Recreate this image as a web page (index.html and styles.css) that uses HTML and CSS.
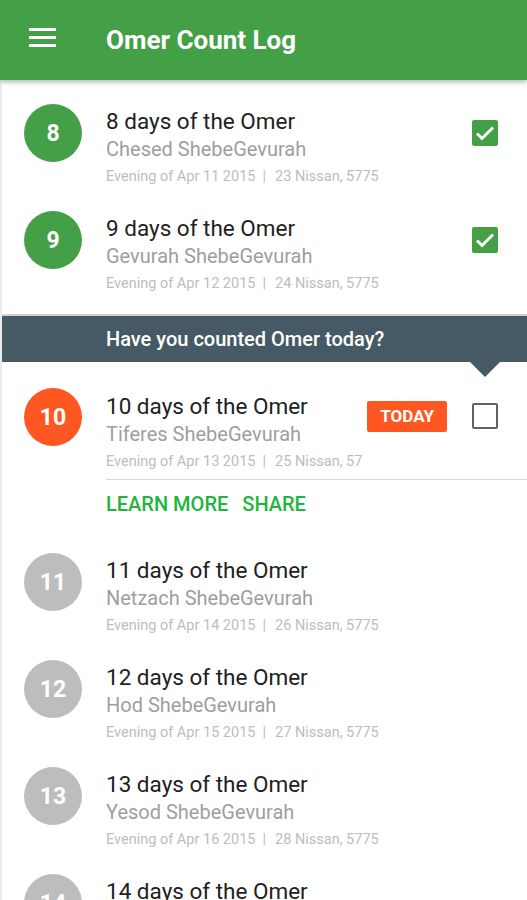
FILE: index.html
```html
<!DOCTYPE html>
<html lang="en">
<head>
    <meta charset="UTF-8">
    <meta name="viewport" content="width=device-width, initial-scale=1.0">
    <title>Omer Count Log</title>
    <link rel="stylesheet" href="styles.css">
</head>
<body>
    <header class="toolbar">
        <svg class="menu" width="27" height="19" viewBox="0 0 27 19">
            <rect x="0" y="0" width="27" height="3" fill="#fff"/>
            <rect x="0" y="8" width="27" height="3" fill="#fff"/>
            <rect x="0" y="16" width="27" height="3" fill="#fff"/>
        </svg>
        <h1>Omer Count Log</h1>
    </header>

    <main class="log">
        <div class="day done">
            <div class="num">8</div>
            <div class="info">
                <div class="title">8 days of the Omer</div>
                <div class="sub">Chesed ShebeGevurah</div>
                <div class="meta">Evening of Apr 11 2015<span class="sep">|</span>23 Nissan, 5775</div>
            </div>
            <div class="check on">
                <svg width="26" height="26" viewBox="0 0 26 26"><path d="M5 13.5l5 5L21 7.5" fill="none" stroke="#fff" stroke-width="3"/></svg>
            </div>
        </div>

        <div class="day done">
            <div class="num">9</div>
            <div class="info">
                <div class="title">9 days of the Omer</div>
                <div class="sub">Gevurah ShebeGevurah</div>
                <div class="meta">Evening of Apr 12 2015<span class="sep">|</span>24 Nissan, 5775</div>
            </div>
            <div class="check on">
                <svg width="26" height="26" viewBox="0 0 26 26"><path d="M5 13.5l5 5L21 7.5" fill="none" stroke="#fff" stroke-width="3"/></svg>
            </div>
        </div>

        <div class="prompt">Have you counted Omer today?</div>

        <div class="day today">
            <div class="num">10</div>
            <div class="info">
                <div class="head">
                    <div class="text">
                        <div class="title">10 days of the Omer</div>
                        <div class="sub">Tiferes ShebeGevurah</div>
                        <div class="meta">Evening of Apr 13 2015<span class="sep">|</span>25 Nissan, 57</div>
                    </div>
                    <span class="tag">TODAY</span>
                    <div class="check"></div>
                </div>
                <div class="actions">
                    <a href="#">Learn more</a>
                    <a href="#">Share</a>
                </div>
            </div>
        </div>

        <div class="day later">
            <div class="num">11</div>
            <div class="info">
                <div class="title">11 days of the Omer</div>
                <div class="sub">Netzach ShebeGevurah</div>
                <div class="meta">Evening of Apr 14 2015<span class="sep">|</span>26 Nissan, 5775</div>
            </div>
        </div>

        <div class="day later">
            <div class="num">12</div>
            <div class="info">
                <div class="title">12 days of the Omer</div>
                <div class="sub">Hod ShebeGevurah</div>
                <div class="meta">Evening of Apr 15 2015<span class="sep">|</span>27 Nissan, 5775</div>
            </div>
        </div>

        <div class="day later">
            <div class="num">13</div>
            <div class="info">
                <div class="title">13 days of the Omer</div>
                <div class="sub">Yesod ShebeGevurah</div>
                <div class="meta">Evening of Apr 16 2015<span class="sep">|</span>28 Nissan, 5775</div>
            </div>
        </div>

        <div class="day later">
            <div class="num">14</div>
            <div class="info">
                <div class="title">14 days of the Omer</div>
                <div class="sub">Malchus ShebeGevurah</div>
                <div class="meta">Evening of Apr 17 2015<span class="sep">|</span>29 Nissan, 5775</div>
            </div>
        </div>
    </main>
</body>
</html>
```

FILE: styles.css
```css
* { box-sizing: border-box; }

body {
  margin: 0;
  height: 900px;
  overflow: hidden;
  font-family: Roboto, "Noto Sans", sans-serif;
  background: #fff;
}

/* Toolbar */

.toolbar {
  position: relative;
  z-index: 2;
  display: flex;
  align-items: center;
  gap: 50px;
  height: 80px;
  padding-left: 29px;
  background: #43a047;
  box-shadow: 0 2px 5px rgba(0, 0, 0, .3);
}

.menu {
  flex: none;
  margin-top: -6px;
}

.toolbar h1 {
  margin: 0;
  color: #fff;
  font-size: 26px;
  font-weight: 700;
}

/* Log list */

.log {
  border-left: 2px solid #ececec;
}

.day {
  display: flex;
  align-items: flex-start;
  padding: 24px 0 0 22px;
}

.done,
.later {
  height: 107px;
}

.num {
  flex: none;
  display: flex;
  align-items: center;
  justify-content: center;
  width: 58px;
  height: 58px;
  border-radius: 50%;
  color: #fff;
  font-size: 23px;
  font-weight: 700;
}

.done .num { background: #43a047; }
.today .num { background: #ff5722; }
.later .num { background: #bdbdbd; }

.info {
  flex: 1;
  min-width: 0;
  margin-left: 24px;
  padding-top: 4px;
  white-space: nowrap;
}

.title {
  color: #212121;
  font-size: 22.5px;
  line-height: 26px;
}

.sub {
  color: #9e9e9e;
  font-size: 20px;
  line-height: 30px;
}

.meta {
  color: #bdbdbd;
  font-size: 14.5px;
  line-height: 26px;
}

.sep {
  margin: 0 9px 0 7px;
}

.check {
  flex: none;
  width: 26px;
  height: 26px;
  margin: 16px 29px 0 0;
  border: 2px solid #616161;
  border-radius: 2px;
}

.check.on {
  border: 0;
  background: #43a047;
}

.check svg {
  display: block;
}

/* Prompt banner */

.prompt {
  position: relative;
  margin-top: 20px;
  height: 48px;
  padding-left: 104px;
  background: #455a64;
  border-top: 2px solid #cfd4d6;
  color: #fff;
  font-size: 20px;
  font-weight: 500;
  line-height: 46px;
}

.prompt::after {
  content: "";
  position: absolute;
  top: 46px;
  left: 468px;
  border: 15px solid transparent;
  border-top-color: #455a64;
  border-bottom: 0;
}

/* Today */

.today {
  padding-top: 26px;
}

.today .info {
  padding-top: 5px;
}

.head {
  display: flex;
  align-items: flex-start;
}

.text {
  flex: 1;
  min-width: 0;
  overflow: hidden;
}

.tag {
  flex: none;
  margin: 8px 25px 0 2px;
  padding: 0 13px;
  height: 31px;
  border-radius: 2px;
  background: #ff5722;
  color: #fff;
  font-size: 17px;
  font-weight: 700;
  line-height: 31px;
}

.today .check {
  margin: 10px 29px 0 0;
}

.actions {
  display: flex;
  gap: 14px;
  height: 50px;
  margin-top: 4px;
  border-top: 1px solid #d6d6d6;
}

.actions a {
  color: #1eb53a;
  font-size: 20px;
  font-weight: 500;
  line-height: 49px;
  text-decoration: none;
  text-transform: uppercase;
}
```
